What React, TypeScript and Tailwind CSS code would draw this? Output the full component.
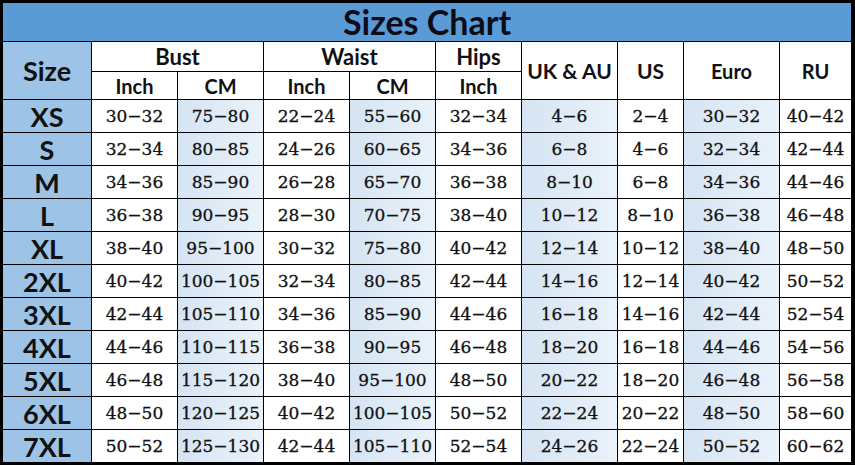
const rows: string[][] = [
  ['XS', '30−32', '75−80', '22−24', '55−60', '32−34', '4−6', '2−4', '30−32', '40−42'],
  ['S', '32−34', '80−85', '24−26', '60−65', '34−36', '6−8', '4−6', '32−34', '42−44'],
  ['M', '34−36', '85−90', '26−28', '65−70', '36−38', '8−10', '6−8', '34−36', '44−46'],
  ['L', '36−38', '90−95', '28−30', '70−75', '38−40', '10−12', '8−10', '36−38', '46−48'],
  ['XL', '38−40', '95−100', '30−32', '75−80', '40−42', '12−14', '10−12', '38−40', '48−50'],
  ['2XL', '40−42', '100−105', '32−34', '80−85', '42−44', '14−16', '12−14', '40−42', '50−52'],
  ['3XL', '42−44', '105−110', '34−36', '85−90', '44−46', '16−18', '14−16', '42−44', '52−54'],
  ['4XL', '44−46', '110−115', '36−38', '90−95', '46−48', '18−20', '16−18', '44−46', '54−56'],
  ['5XL', '46−48', '115−120', '38−40', '95−100', '48−50', '20−22', '18−20', '46−48', '56−58'],
  ['6XL', '48−50', '120−125', '40−42', '100−105', '50−52', '22−24', '20−22', '48−50', '58−60'],
  ['7XL', '50−52', '125−130', '42−44', '105−110', '52−54', '24−26', '22−24', '50−52', '60−62'],
];

// columns 2, 4, 6, 8 (0-based) get the light blue tint
const shaded = [2, 4, 6, 8];

const head = "font-['Lato',sans-serif] font-bold text-[#111] flex items-center justify-center bg-white leading-none";

const App = () => {
  return (
    <div className="w-[855px] h-[465px] bg-black pt-[3px] pl-[3px] pr-[4px] pb-[3px]">
      <div className="grid gap-px grid-cols-[88px_85px_85px_85px_85px_85px_95px_65px_95px_71px] grid-rows-[38px_29px_27px_repeat(11,32px)]">
        {/* Title */}
        <div className="col-span-10 bg-[#5b9bd5] flex items-center justify-center font-['Lato',sans-serif] font-bold text-[34px] text-[#0d0d1a] leading-none">
          Sizes Chart
        </div>

        {/* Header */}
        <div className={`${head} row-span-2 !bg-[#9dc3e6] text-[27px]`}>Size</div>
        <div className={`${head} col-span-2 text-[22px]`}>Bust</div>
        <div className={`${head} col-span-2 text-[22px]`}>Waist</div>
        <div className={`${head} text-[22px]`}>Hips</div>
        <div className={`${head} row-span-2 text-[21px]`}>UK &amp; AU</div>
        <div className={`${head} row-span-2 text-[21px]`}>US</div>
        <div className={`${head} row-span-2 text-[20px]`}>Euro</div>
        <div className={`${head} row-span-2 text-[20px]`}>RU</div>
        <div className={`${head} text-[20px]`}>Inch</div>
        <div className={`${head} text-[20px]`}>CM</div>
        <div className={`${head} text-[20px]`}>Inch</div>
        <div className={`${head} text-[20px]`}>CM</div>
        <div className={`${head} text-[20px]`}>Inch</div>

        {/* Data */}
        {rows.map((row) =>
          row.map((cell, i) =>
            i === 0 ? (
              <div
                key={row[0] + i}
                className="bg-[#9dc3e6] flex items-center justify-center font-['Lato',sans-serif] font-bold text-[27px] text-[#111] leading-none"
              >
                {cell}
              </div>
            ) : (
              <div
                key={row[0] + i}
                className={`flex items-center justify-center font-['DejaVu_Serif',serif] text-[17px] text-[#111] leading-none [-webkit-text-stroke:0.3px_#111] ${
                  shaded.includes(i)
                    ? 'bg-gradient-to-r from-[#d5e4f3] to-[#eaf2fa]'
                    : 'bg-white'
                }`}
              >
                {cell}
              </div>
            )
          )
        )}
      </div>
    </div>
  );
};

export default App;
